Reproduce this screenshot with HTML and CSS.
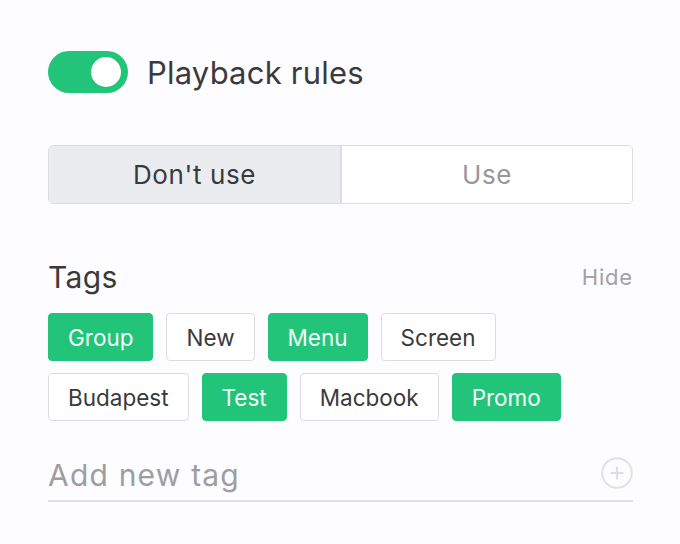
FILE: index.html
```html
<!DOCTYPE html>
<html>
  <head>
    <title>Playback rules</title>
    <meta name="viewport" content="width=device-width, initial-scale=1.0" />
    <link rel="stylesheet" href="styles.css">
  </head>
  <body>
    <div class="panel">
      <div class="rule-row">
        <span class="switch"><span class="knob"></span></span>
        <span class="rule-title">Playback rules</span>
      </div>

      <div class="segment">
        <button type="button" class="active">Don't use</button>
        <button type="button">Use</button>
      </div>

      <div class="tags-head">
        <h3>Tags</h3>
        <span class="hide-link">Hide</span>
      </div>

      <div class="tag-list">
        <span class="tag on">Group</span>
        <span class="tag">New</span>
        <span class="tag on">Menu</span>
        <span class="tag">Screen</span>
        <span class="tag">Budapest</span>
        <span class="tag on">Test</span>
        <span class="tag">Macbook</span>
        <span class="tag on">Promo</span>
      </div>

      <div class="add-tag">
        <input type="text" placeholder="Add new tag" />
        <svg class="add-btn" width="32" height="32" viewBox="0 0 32 32">
          <circle cx="16" cy="16" r="14.8" fill="none" stroke="#e2e1e4" stroke-width="2" />
          <path d="M16 10.5v11M10.5 16h11" stroke="#dedde0" stroke-width="2.2" stroke-linecap="round" />
        </svg>
      </div>
    </div>
  </body>
</html>
```

FILE: styles.css
```css
body {
  font-family: Inter, "Noto Sans", Arial, sans-serif;
  background: #fdfcfe;
  color: #3a3a3c;
  margin: 0;
  padding: 0;
}
.panel {
  width: 585px;
  padding: 51px 0 0 48px;
}
.rule-row {
  display: flex;
  align-items: center;
  gap: 19px;
  height: 42px;
}
.switch {
  display: flex;
  align-items: center;
  justify-content: flex-end;
  width: 80px;
  height: 42px;
  padding-right: 7px;
  box-sizing: border-box;
  border-radius: 21px;
  background: #21c479;
}
.knob {
  width: 30px;
  height: 30px;
  border-radius: 50%;
  background: #fff;
}
.rule-title {
  font-size: 31px;
  letter-spacing: 0.2px;
}
.segment {
  display: flex;
  margin-top: 52px;
  height: 59px;
  border: 1px solid #dddde1;
  border-radius: 5px;
  overflow: hidden;
  box-sizing: border-box;
}
.segment button {
  flex: 1;
  border: none;
  background: #fff;
  font-family: inherit;
  font-size: 26px;
  letter-spacing: 0.6px;
  color: #98979b;
  padding: 0;
}
.segment button.active {
  background: #ebecf0;
  color: #3a3a3c;
  border-right: 2px solid #dddde1;
  flex: 0 0 293px;
}
.tags-head {
  display: flex;
  justify-content: space-between;
  align-items: center;
  margin-top: 55px;
  height: 36px;
}
.tags-head h3 {
  margin: 0;
  font-size: 30px;
  font-weight: 400;
  letter-spacing: 0.4px;
}
.hide-link {
  font-size: 22px;
  letter-spacing: 0.8px;
  color: #a2a1a5;
}
.tag-list {
  display: flex;
  flex-wrap: wrap;
  gap: 12px 13px;
  margin-top: 18px;
  width: 540px;
}
.tag {
  display: flex;
  align-items: center;
  height: 48px;
  padding: 0 19px;
  box-sizing: border-box;
  border: 1px solid #dddde1;
  border-radius: 4px;
  background: #fff;
  font-size: 22.5px;
  color: #3a3a3c;
}
.tag.on {
  background: #21c479;
  border-color: #21c479;
  color: #f4fff9;
}
.add-tag {
  display: flex;
  align-items: center;
  justify-content: space-between;
  margin-top: 28px;
  height: 51px;
  border-bottom: 2px solid #e0dfe3;
}
.add-tag input {
  border: none;
  outline: none;
  background: transparent;
  font-family: inherit;
  font-size: 30px;
  letter-spacing: 1.2px;
  padding: 0;
  width: 400px;
}
.add-tag input::placeholder {
  color: #9e9da1;
}
.add-btn {
  margin-bottom: 4px;
}
```
